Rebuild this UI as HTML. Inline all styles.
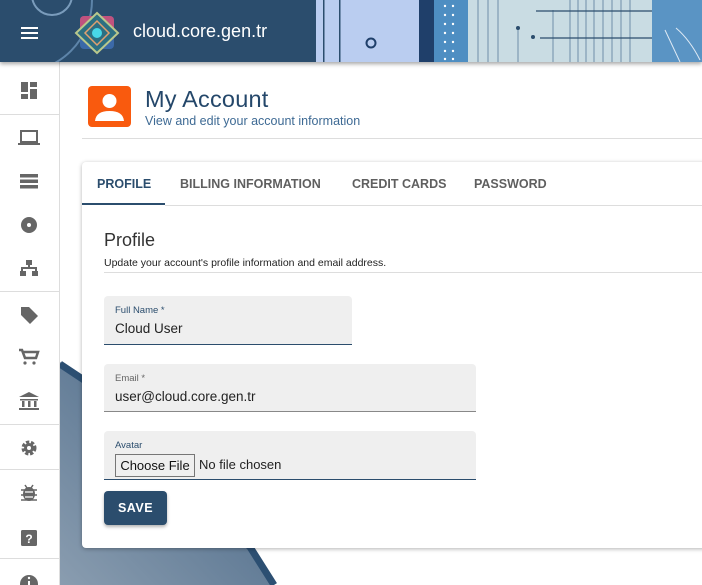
<!DOCTYPE html>
<html><head><meta charset="utf-8"><style>
*{box-sizing:border-box;margin:0;padding:0}
body{width:702px;height:585px;overflow:hidden;background:#fff;font-family:"Liberation Sans",Roboto,sans-serif;position:relative}
.hdr{position:absolute;left:0;top:0;width:702px;height:62px;background:#2b4d6d;box-shadow:0 2px 4px rgba(0,0,0,.35);overflow:hidden;z-index:5}
.side{position:absolute;left:0;top:62px;width:60px;height:523px;border-right:1px solid #ddd;background:#fff}
.side .dv{position:absolute;left:0;width:59px;height:1px;background:#ddd}
.tab{position:absolute;top:177px;font-size:12.5px;font-weight:bold;color:#5f5f5f;letter-spacing:0}
.fld{position:absolute;background:#efefef;border-radius:4px 4px 0 0}
.lbl{position:absolute;left:11px;top:9px;font-size:9.5px;color:#666}
.val{position:absolute;left:11px;font-size:13.5px;color:#222}
</style></head><body>
<svg style="position:absolute;left:60px;top:340px" width="642" height="245">
<defs><linearGradient id="g" x1="0" y1="1" x2="1" y2="0"><stop offset="0" stop-color="#8a9db0"/><stop offset="1" stop-color="#3f5f80"/></linearGradient></defs>
<polygon points="0,22 30,42 190,205 214,245 0,245" fill="url(#g)"/>
<polyline points="0,24 30,44 190,207 214,245" fill="none" stroke="#2c4f72" stroke-width="7"/>
</svg>
<div class="hdr">
<svg width="702" height="62" style="position:absolute;left:0;top:0">
<circle cx="20" cy="0" r="72" fill="none" stroke="#6a92b8" stroke-width="2" opacity=".8"/>
<circle cx="52" cy="-5" r="20" fill="none" stroke="#8fb0cf" stroke-width="2" opacity=".8"/>
<rect x="21" y="27" width="17" height="2" fill="#fff"/><rect x="21" y="32" width="17" height="2" fill="#fff"/><rect x="21" y="37" width="17" height="2" fill="#fff"/>
<rect x="80" y="16" width="34" height="33" rx="4" fill="#3b69a8"/>
<rect x="80" y="16" width="34" height="16" rx="4" fill="#c0527e"/>
<polygon points="97,13 118,33 97,53 76,33" fill="#2d6f82" stroke="#b9c88c" stroke-width="2"/>
<polygon points="97,21 109,33 97,45 85,33" fill="none" stroke="#e0a070" stroke-width="1.5"/>
<circle cx="97" cy="33" r="5" fill="#48d8e8"/>
<rect x="300" y="0" width="16" height="62" fill="#2b4d6d"/>
<rect x="316" y="0" width="103" height="62" fill="#bacdf0"/>
<rect x="323" y="0" width="1.5" height="62" fill="#2b4d6d"/><rect x="339" y="0" width="1.5" height="62" fill="#2b4d6d"/>
<circle cx="371" cy="43" r="4.5" fill="none" stroke="#1f3f6a" stroke-width="2"/>
<rect x="419" y="0" width="15" height="62" fill="#1f3f6a"/>
<rect x="434" y="0" width="34" height="62" fill="#4e8ec2"/>
<g fill="#fff"><circle cx="445" cy="6" r="1.2"/><circle cx="453" cy="6" r="1.2"/><circle cx="445" cy="15" r="1.2"/><circle cx="453" cy="15" r="1.2"/><circle cx="445" cy="24" r="1.2"/><circle cx="453" cy="24" r="1.2"/><circle cx="445" cy="33" r="1.2"/><circle cx="453" cy="33" r="1.2"/><circle cx="445" cy="42" r="1.2"/><circle cx="453" cy="42" r="1.2"/><circle cx="445" cy="51" r="1.2"/><circle cx="453" cy="51" r="1.2"/><circle cx="445" cy="59" r="1.2"/><circle cx="453" cy="59" r="1.2"/></g>
<rect x="468" y="0" width="184" height="62" fill="#c9dce3"/>
<g stroke="#6f8ea8" stroke-width="1"><line x1="478" y1="0" x2="478" y2="62"/><line x1="488" y1="0" x2="488" y2="62"/><line x1="498" y1="0" x2="498" y2="62"/><line x1="518" y1="26" x2="518" y2="62"/><line x1="553" y1="10" x2="553" y2="62"/><line x1="570" y1="0" x2="570" y2="62"/><line x1="578" y1="0" x2="578" y2="62"/><line x1="586" y1="0" x2="586" y2="62"/><line x1="594" y1="0" x2="594" y2="62"/><line x1="603" y1="0" x2="603" y2="62"/><line x1="612" y1="0" x2="612" y2="62"/><line x1="621" y1="0" x2="621" y2="62"/><line x1="630" y1="0" x2="630" y2="62"/></g>
<g stroke="#2b4d6d" stroke-width="1.2"><line x1="536" y1="11" x2="665" y2="11"/><line x1="540" y1="38" x2="665" y2="38"/></g>
<circle cx="518" cy="28" r="2" fill="#2b4d6d"/><circle cx="533" cy="37" r="2" fill="#2b4d6d"/>
<rect x="652" y="0" width="50" height="62" fill="#5a94c4"/>
<path d="M665 30 L680 62 M676 28 Q690 40 700 60" stroke="#dfeaf5" stroke-width="1" fill="none"/>
</svg>
<div style="position:absolute;left:133px;top:21px;color:#fff;font-size:18px">cloud.core.gen.tr</div>
</div>
<div class="side">
<div class="dv" style="top:52px"></div><div class="dv" style="top:229px"></div><div class="dv" style="top:362px"></div><div class="dv" style="top:407px"></div><div class="dv" style="top:496px"></div>
<svg width="60" height="523" style="position:absolute;left:0;top:0" fill="#666">
<rect x="21" y="20" width="7" height="10"/><rect x="30" y="20" width="7" height="5"/><rect x="21" y="32" width="7" height="5"/><rect x="30" y="27" width="7" height="10"/>
<rect x="21" y="69" width="16" height="11" fill="none" stroke="#666" stroke-width="2"/><rect x="18" y="81" width="22" height="2"/>
<rect x="20" y="112" width="18" height="3.5"/><rect x="20" y="117.5" width="18" height="3.5"/><rect x="20" y="123" width="18" height="3.5"/>
<circle cx="29" cy="163" r="8"/><circle cx="29" cy="163" r="2" fill="#fff"/>
<rect x="26" y="198" width="6" height="5"/><rect x="28" y="203" width="2" height="3"/><rect x="21" y="205" width="16" height="2"/><rect x="21" y="205" width="2" height="4"/><rect x="35" y="205" width="2" height="4"/><rect x="20" y="209" width="6" height="5"/><rect x="32" y="209" width="6" height="5"/>
<path d="M21 245 h8 l9 9 l-8 8 l-9 -9 z"/>
<path d="M19 288 h3 l3 8 h11 l2 -6 h-15" fill="none" stroke="#666" stroke-width="2.5"/><circle cx="25" cy="301" r="1.6"/><circle cx="34" cy="301" r="1.6"/>
<path d="M19 335 l10 -5 l10 5 z"/><rect x="20" y="337" width="18" height="1.5"/><rect x="22" y="339" width="2.5" height="6"/><rect x="28" y="339" width="2.5" height="6"/><rect x="34" y="339" width="2.5" height="6"/><rect x="19" y="346" width="20" height="2"/>
<circle cx="29" cy="386" r="5.5" fill="none" stroke="#666" stroke-width="4" stroke-dasharray="3 1.6"/><circle cx="29" cy="386" r="5"/><circle cx="29" cy="386" r="2" fill="#fff"/>
<ellipse cx="29" cy="432" rx="6" ry="7"/><path d="M21 428 h16 M21 433 h16 M21 438 h16 M25 423 l2 3 M33 423 l-2 3" stroke="#666" stroke-width="1.5"/><path d="M25 430 h8 M25 435 h8" stroke="#fff" stroke-width="1.3"/>
<rect x="21" y="468" width="16" height="16" rx="1.5"/><text x="29" y="481" font-size="12" font-weight="bold" fill="#fff" text-anchor="middle" font-family="Liberation Sans">?</text>
<circle cx="29" cy="522" r="9"/><rect x="28" y="519" width="2" height="6" fill="#fff"/><circle cx="29" cy="516" r="1.2" fill="#fff"/>
</svg>
</div>
<svg style="position:absolute;left:88px;top:86px" width="43" height="41"><rect width="43" height="41" rx="4" fill="#f95a0e"/><circle cx="21.5" cy="15" r="7" fill="#fff"/><path d="M7 35 Q8 25 21.5 25 Q35 25 36 35 Z" fill="#fff"/></svg>
<div style="position:absolute;left:145px;top:86px;font-size:23.5px;color:#24476a;letter-spacing:.2px">My Account</div>
<div style="position:absolute;left:145px;top:114px;font-size:12.5px;color:#3e6a94">View and edit your account information</div>
<div style="position:absolute;left:82px;top:138px;width:620px;height:1px;background:#ddd"></div>
<div style="position:absolute;left:82px;top:162px;width:630px;height:386px;background:#fff;border-radius:4px;box-shadow:0 1px 4px rgba(0,0,0,.3)"></div>
<div class="tab" style="left:97px;color:#2b4d6d">PROFILE</div>
<div class="tab" style="left:180px">BILLING INFORMATION</div>
<div class="tab" style="left:352px">CREDIT CARDS</div>
<div class="tab" style="left:474px">PASSWORD</div>
<div style="position:absolute;left:82px;top:203px;width:83px;height:2px;background:#2b4d6d"></div>
<div style="position:absolute;left:165px;top:205px;width:537px;height:1px;background:#ddd"></div>
<div style="position:absolute;left:104px;top:230px;font-size:18px;color:#333">Profile</div>
<div style="position:absolute;left:104px;top:257px;font-size:10.5px;color:#222">Update your account's profile information and email address.</div>
<div style="position:absolute;left:104px;top:272px;width:598px;height:1px;background:#ddd"></div>
<div class="fld" style="left:104px;top:296px;width:248px;height:49px;border-bottom:1.5px solid #2b4d6d"><div class="lbl" style="color:#2b4d6d">Full Name *</div><div class="val" style="top:25px">Cloud User</div></div>
<div class="fld" style="left:104px;top:364px;width:372px;height:48px;border-bottom:1px solid #888"><div class="lbl">Email *</div><div class="val" style="top:25px">user@cloud.core.gen.tr</div></div>
<div class="fld" style="left:104px;top:431px;width:372px;height:49px;border-bottom:1.5px solid #2b4d6d"><div class="lbl" style="color:#2b4d6d">Avatar</div>
<div style="position:absolute;left:11px;top:23px;width:80px;height:23px;border:1px solid #767676;background:#efefef;font-size:13px;line-height:21px;text-align:center;color:#111">Choose File</div>
<div class="val" style="left:95px;top:26px;font-size:13px">No file chosen</div></div>
<div style="position:absolute;left:104px;top:491px;width:63px;height:34px;background:#2b4d6d;border-radius:4px;box-shadow:0 2px 3px rgba(0,0,0,.3);color:#fff;font-size:12.5px;font-weight:bold;text-align:center;line-height:34px;letter-spacing:.5px">SAVE</div>
</body></html>
